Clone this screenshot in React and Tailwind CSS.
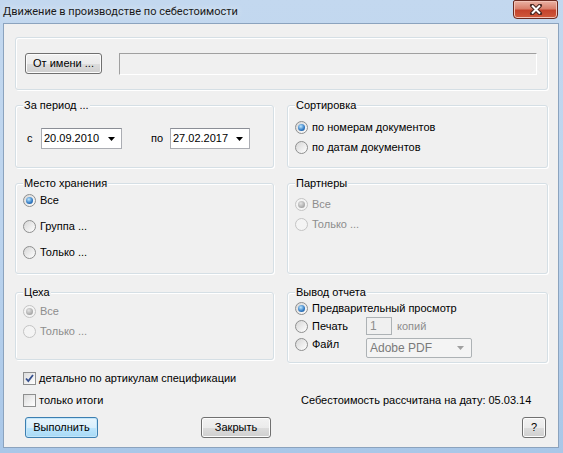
import { useState } from "react";

// Win7-style radio dot
const Radio = ({ checked, disabled }) => (
  <span
    className={`flex size-[13px] shrink-0 items-center justify-center rounded-full border ${
      disabled
        ? "border-[#c4c4c4] bg-[#f4f4f4]"
        : "border-[#8e8f8f] bg-linear-to-br from-[#d6d6d6] to-[#ffffff]"
    }`}
  >
    {checked && (
      <span
        className={`size-[7px] rounded-full ${
          disabled
            ? "bg-[radial-gradient(circle_at_40%_35%,#e4e4e4,#a6a6a6_70%,#8a8a8a)]"
            : "bg-[radial-gradient(circle_at_40%_35%,#bfe8ff,#2f78c2_60%,#1a4a86)]"
        }`}
      />
    )}
  </span>
);

const RadioRow = ({ label, checked, disabled, className = "" }) => (
  <div className={`flex items-center gap-[4px] ${className}`}>
    <Radio checked={checked} disabled={disabled} />
    <span className={disabled ? "text-[#8d8d8d]" : "text-black"}>{label}</span>
  </div>
);

const Checkbox = ({ checked, label }) => {
  const [on, setOn] = useState(checked);
  return (
    <div className="flex h-[15px] items-center gap-[3px]" onClick={() => setOn(!on)}>
      <span className="flex size-[13px] items-center justify-center border border-[#8e8f8f] bg-linear-to-br from-[#dcdcdc] to-[#ffffff]">
        {on && (
          <svg width="11" height="11" viewBox="0 0 11 11">
            <path d="M2 5.5 L4.3 8 L9 2" fill="none" stroke="#36508e" strokeWidth="1.8" />
          </svg>
        )}
      </span>
      <span>{label}</span>
    </div>
  );
};

const Button = ({ children, primary, className = "" }) => (
  <button
    className={`h-[21px] rounded-[3px] border text-[11px] leading-[13px] text-black ${
      primary
        ? "border-[#3c7fb1] bg-[linear-gradient(#e8f5fd,#d9effc_50%,#bee6fd_50%,#a7d9f5)] shadow-[inset_0_0_0_1px_#c4e6f9]"
        : "border-[#707070] bg-[linear-gradient(#f2f2f2,#ebebeb_50%,#dddddd_50%,#cfcfcf)] shadow-[inset_0_0_0_1px_#fcfcfc]"
    } ${className}`}
  >
    {children}
  </button>
);

const Group = ({ title, className = "", children }) => (
  <div
    className={`relative rounded-[3px] border border-[#d5dfe5] shadow-[inset_1px_1px_0_#ffffff,1px_1px_0_#ffffff] ${className}`}
  >
    {title && (
      <span className="absolute -top-[7px] left-[7px] bg-[#f0f0f0] px-[1px] leading-[13px]">
        {title}
      </span>
    )}
    {children}
  </div>
);

const DateBox = ({ value, className = "" }) => (
  <div
    className={`flex h-[21px] items-center justify-between border border-[#abadb3] border-t-[#8b8e96] bg-white pl-[2px] pr-[6px] ${className}`}
  >
    <span>{value}</span>
    <svg width="7" height="4" viewBox="0 0 7 4">
      <path d="M0 0 H7 L3.5 4 Z" fill="#000" />
    </svg>
  </div>
);

export default function App() {
  return (
    <div className="flex h-[453px] w-[563px] flex-col bg-linear-to-b from-[#c3d8ef] via-[#bcd4ee] to-[#a9c7e8] font-['Liberation_Sans',Arial,sans-serif] text-[11px] leading-[13px] text-black">
      {/* title bar */}
      <div className="flex h-[23px] shrink-0 items-start">
        <span className="pl-[3px] pt-[4px] font-['Roboto',sans-serif] text-[11px] font-normal leading-[15px] text-[#1a1a1a] [text-shadow:0_0_7px_rgba(255,255,255,0.8)]">
          Движение в производстве по себестоимости
        </span>
        <button className="ml-auto mr-[5px] flex h-[19px] w-[45px] items-center justify-center rounded-b-[4px] rounded-t-[2px] border border-[#6b2a20] bg-[linear-gradient(#eab2a4,#d9806c_45%,#c4432c_55%,#d05a3c)] shadow-[inset_0_0_0_1px_#f2c2b6]">
          <svg width="14" height="11" viewBox="0 0 14 11">
            <path d="M3 1.5 L11 9.5 M11 1.5 L3 9.5" stroke="#4a2620" strokeWidth="4" strokeLinecap="round" />
            <path d="M3 1.5 L11 9.5 M11 1.5 L3 9.5" stroke="#ffffff" strokeWidth="2" />
          </svg>
        </button>
      </div>

      {/* client area */}
      <div className="mb-[5px] ml-[3px] mr-[4px] flex-1 border border-[#8ba3be] bg-[#f0f0f0] pl-[11px] pr-[10px] pt-[13px]">
        <Group className="flex h-[53px] items-center pl-[9px] pr-[10px]">
          <Button className="w-[77px]">От имени ...</Button>
          <div className="ml-[17px] h-[22px] flex-1 border border-[#a0a0a0] border-b-white border-r-white" />
        </Group>

        <div className="mt-[15px] grid grid-cols-[259px_261px] gap-x-[13px]">
          <Group title="За период ..." className="h-[63px] pl-[11px] pt-[22px]">
            <div className="flex h-[21px] items-center">
              <span className="w-[14px]">с</span>
              <DateBox value="20.09.2010" className="w-[81px]" />
              <span className="ml-[29px] w-[19px]">по</span>
              <DateBox value="27.02.2017" className="w-[80px]" />
            </div>
          </Group>
          <Group title="Сортировка" className="h-[63px] pl-[7px] pt-[11px]">
            <RadioRow className="h-[20px]" label="по номерам документов" checked />
            <RadioRow className="h-[20px]" label="по датам документов" />
          </Group>
        </div>

        <div className="mt-[15px] grid grid-cols-[259px_261px] gap-x-[13px]">
          <Group title="Место хранения" className="h-[91px] pl-[7px] pt-[3px]">
            <RadioRow className="h-[26px]" label="Все" checked />
            <RadioRow className="h-[26px]" label="Группа ..." />
            <RadioRow className="h-[26px]" label="Только ..." />
          </Group>
          <Group title="Партнеры" className="h-[91px] pl-[7px] pt-[10px]">
            <RadioRow className="h-[20px]" label="Все" checked disabled />
            <RadioRow className="h-[20px]" label="Только ..." disabled />
          </Group>
        </div>

        <div className="mt-[18px] grid grid-cols-[259px_261px] items-start gap-x-[13px]">
          <Group title="Цеха" className="h-[68px] pl-[7px] pt-[8px]">
            <RadioRow className="h-[20px]" label="Все" checked disabled />
            <RadioRow className="h-[20px]" label="Только ..." disabled />
          </Group>
          <Group title="Вывод отчета" className="h-[71px] pl-[7px] pt-[6px]">
            <RadioRow className="h-[18px]" label="Предварительный просмотр" checked />
            <div className="flex h-[18px] items-center">
              <RadioRow className="w-[71px]" label="Печать" />
              <div className="flex h-[18px] w-[26px] items-center self-start border border-[#adb2b5] bg-[#f0f0f0] pl-[3px] text-[12px] text-[#8d8d8d]">
                1
              </div>
              <span className="ml-[5px] text-[#8d8d8d]">копий</span>
            </div>
            <div className="flex h-[18px] items-center">
              <RadioRow className="w-[71px]" label="Файл" />
              <div className="mt-[3px] flex h-[20px] w-[106px] items-center justify-between self-start rounded-[2px] border border-[#adb2b5] bg-[#f4f4f4] pl-[3px] pr-[7px] text-[12px] text-[#7a7a7a]">
                <span>Adobe PDF</span>
                <svg width="7" height="4" viewBox="0 0 7 4">
                  <path d="M0 0 H7 L3.5 4 Z" fill="#a0a0a0" />
                </svg>
              </div>
            </div>
          </Group>
        </div>

        <div className="mt-[8px] pl-[8px]">
          <Checkbox checked label="детально по артикулам спецификации" />
        </div>

        <div className="mt-[7px] grid grid-cols-[259px_261px] gap-x-[13px]">
          <div className="pl-[8px]">
            <Checkbox label="только итоги" />
          </div>
          <div className="flex h-[15px] items-center pl-[14px]">
            Себестоимость рассчитана на дату: 05.03.14
          </div>
        </div>

        <div className="mt-[9px] grid grid-cols-[259px_261px] gap-x-[13px]">
          <div className="flex justify-between pl-[10px] pr-[3px]">
            <Button primary className="w-[73px]">
              Выполнить
            </Button>
            <Button className="w-[70px]">Закрыть</Button>
          </div>
          <div className="flex justify-end pr-[2px]">
            <Button className="w-[24px]">?</Button>
          </div>
        </div>
      </div>
    </div>
  );
}
